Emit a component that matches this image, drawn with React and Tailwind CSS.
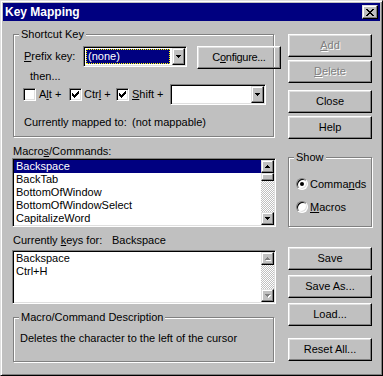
import React from "react";

const raised =
  "border border-t-white border-l-white border-r-black border-b-black shadow-[inset_-1px_-1px_0_#808080,inset_1px_1px_0_#dfdfdf]";
const sbRaised =
  "border border-t-[#dfdfdf] border-l-[#dfdfdf] border-r-black border-b-black shadow-[inset_-1px_-1px_0_#808080,inset_1px_1px_0_#fff]";
const sunken =
  "border border-t-[#808080] border-l-[#808080] border-r-white border-b-white shadow-[inset_1px_1px_0_#000,inset_-1px_-1px_0_#dfdfdf]";
const etched = "border border-[#808080] shadow-[inset_1px_1px_0_#fff,1px_1px_0_#fff]";
const checker =
  "bg-[image:repeating-conic-gradient(#c0c0c0_0%_25%,#fff_0%_50%)] bg-[length:2px_2px]";

// small 5x3 triangle, pixel style
const Arrow = ({ up = false, disabled = false }) => {
  const rows = up
    ? [[2, 0, 1], [1, 1, 3], [0, 2, 5]]
    : [[0, 0, 5], [1, 1, 3], [2, 2, 1]];
  return (
    <svg width="6" height="4" viewBox="0 0 6 4" shapeRendering="crispEdges">
      {disabled &&
        rows.map(([x, y, w]) => (
          <rect key={"s" + y} x={x + 1} y={y + 1} width={w} height="1" fill="#fff" />
        ))}
      {rows.map(([x, y, w]) => (
        <rect key={y} x={x} y={y} width={w} height="1" fill={disabled ? "#808080" : "#000"} />
      ))}
    </svg>
  );
};

const ArrowBtn = ({ up, disabled, className = "" }) => (
  <div className={`w-[13px] h-[13px] shrink-0 bg-[#c0c0c0] flex items-center justify-center ${sbRaised} ${className}`}>
    <Arrow up={up} disabled={disabled} />
  </div>
);

const ScrollBar = ({ disabled = false }) => (
  <div className="w-[13px] h-full flex flex-col">
    <ArrowBtn up disabled={disabled} />
    {!disabled && <div className={`h-[8px] shrink-0 bg-[#c0c0c0] ${sbRaised}`} />}
    <div className={`flex-1 ${checker}`} />
    <ArrowBtn disabled={disabled} />
  </div>
);

const Btn = ({ children, disabled = false, className = "" }) => (
  <div
    className={`h-[23px] w-[84px] shrink-0 flex items-center justify-center ${raised} ${
      disabled ? "text-[#808080] [text-shadow:1px_1px_0_#fff]" : ""
    } ${className}`}
  >
    <span>{children}</span>
  </div>
);

const Combo = ({ className = "", value }) => (
  <div className={`h-[21px] shrink-0 bg-white p-[1px] flex ${sunken} ${className}`}>
    <div className="flex-1 flex">
      {value && (
        <div className="flex-1 m-[1px] mr-[2px] bg-[#000080] border border-dotted border-[#ffff00] text-white pl-[1px] leading-[13px]">
          {value}
        </div>
      )}
    </div>
    <div className={`w-[13px] h-full bg-[#c0c0c0] flex items-center justify-center ${sbRaised}`}>
      <Arrow />
    </div>
  </div>
);

const Check = ({ checked }) => (
  <div className={`w-[13px] h-[13px] shrink-0 bg-white p-[1px] flex items-center justify-center ${sunken}`}>
    {checked && (
      <svg width="7" height="7" viewBox="0 0 7 7" shapeRendering="crispEdges">
        <rect x="6" y="0" width="1" height="1" />
        <rect x="5" y="1" width="2" height="1" />
        <rect x="0" y="2" width="1" height="1" />
        <rect x="4" y="2" width="3" height="1" />
        <rect x="0" y="3" width="2" height="1" />
        <rect x="3" y="3" width="3" height="1" />
        <rect x="0" y="4" width="5" height="1" />
        <rect x="1" y="5" width="3" height="1" />
        <rect x="2" y="6" width="1" height="1" />
      </svg>
    )}
  </div>
);

const Radio = ({ checked }) => (
  <div className="w-[12px] h-[12px] shrink-0 rounded-full bg-white border border-t-[#808080] border-l-[#808080] border-r-white border-b-white shadow-[inset_1px_1px_0_#000,inset_-1px_-1px_0_#dfdfdf] flex items-center justify-center">
    {checked && <div className="w-[4px] h-[4px] rounded-full bg-black" />}
  </div>
);

const GroupLabel = ({ children }) => (
  <span className="absolute left-[5px] top-[-7px] px-[2px] bg-[#c0c0c0]">{children}</span>
);

const commands = ["Backspace", "BackTab", "BottomOfWindow", "BottomOfWindowSelect", "CapitalizeWord"];

export default function App() {
  return (
    <div className="w-[383px] h-[376px] bg-[#c0c0c0] border border-t-[#dfdfdf] border-l-[#dfdfdf] border-r-black border-b-black shadow-[inset_1px_1px_0_#fff,inset_-1px_-1px_0_#808080] p-[2px] flex flex-col font-['Liberation_Sans',Arial,sans-serif] text-[11px] leading-[13px] text-black select-none">
      {/* Title bar */}
      <div className="h-[18px] shrink-0 bg-[#000080] flex items-start justify-between pl-[2px] pr-[2px]">
        <span className="text-white font-bold text-[12px] leading-[18px]">Key Mapping</span>
        <div className={`mt-[2px] w-[16px] h-[14px] bg-[#c0c0c0] flex items-center justify-center ${sbRaised}`}>
          <svg width="8" height="7" viewBox="0 0 8 7" shapeRendering="crispEdges">
            <rect x="0" y="0" width="2" height="1" />
            <rect x="6" y="0" width="2" height="1" />
            <rect x="1" y="1" width="2" height="1" />
            <rect x="5" y="1" width="2" height="1" />
            <rect x="2" y="2" width="4" height="1" />
            <rect x="3" y="3" width="2" height="1" />
            <rect x="2" y="4" width="4" height="1" />
            <rect x="1" y="5" width="2" height="1" />
            <rect x="5" y="5" width="2" height="1" />
            <rect x="0" y="6" width="2" height="1" />
            <rect x="6" y="6" width="2" height="1" />
          </svg>
        </div>
      </div>

      <div className="flex pl-[9px]">
        {/* Left column */}
        <div className="w-[264px] flex flex-col pt-[13px]">
          {/* Shortcut Key */}
          <div className={`relative ml-[1px] w-[261px] h-[103px] ${etched} pt-[11px] pl-[9px]`}>
            <GroupLabel>Shortcut Key</GroupLabel>
            <div className="flex items-start">
              <span className="ml-[1px] mt-[4px] w-[59px] shrink-0">
                <span className="underline">P</span>refix key:
              </span>
              <Combo className="w-[104px]" value="(none)" />
              <Btn className="ml-[10px] w-[70px] tracking-[-0.3px]">
                C<span className="underline">o</span>nfigure...
              </Btn>
            </div>
            <div className="ml-[7px] mt-[1px]">then...</div>
            <div className="mt-[1px] h-[21px] flex items-center">
              <div className="w-[46px] flex items-center">
                <Check />
                <span className="ml-[3px]">
                  A<span className="underline">l</span>t +
                </span>
              </div>
              <div className="w-[47px] flex items-center">
                <Check checked />
                <span className="ml-[2px]">
                  Ctr<span className="underline">l</span> +
                </span>
              </div>
              <div className="w-[54px] flex items-center">
                <Check checked />
                <span className="ml-[3px]">
                  <span className="underline">S</span>hift +
                </span>
              </div>
              <Combo className="w-[96px]" />
            </div>
            <div className="mt-[11px] flex">
              <span className="ml-[1px] w-[108px]">Currently mapped to:</span>
              <span>(not mappable)</span>
            </div>
          </div>

          <div className="mt-[8px] ml-[1px]">
            Macro<span className="underline">s</span>/Commands:
          </div>
          <div className={`h-[69px] w-[264px] bg-white p-[1px] flex ${sunken}`}>
            <div className="flex-1 flex flex-col">
              {commands.map((c, i) => (
                <div
                  key={c}
                  className={`h-[13px] pl-[2px] ${i === 0 ? "bg-[#000080] text-white" : ""}`}
                >
                  {c}
                </div>
              ))}
            </div>
            <ScrollBar />
          </div>

          <div className="mt-[7px] ml-[1px] flex">
            <span className="w-[99px]">
              Currently <span className="underline">k</span>eys for:
            </span>
            <span>Backspace</span>
          </div>
          <div className={`mt-[3px] h-[54px] w-[264px] bg-white p-[1px] flex ${sunken}`}>
            <div className="flex-1 flex flex-col">
              <div className="h-[13px] pl-[2px]">Backspace</div>
              <div className="h-[13px] pl-[2px]">Ctrl+H</div>
            </div>
            <ScrollBar disabled />
          </div>

          {/* Description */}
          <div className={`relative mt-[13px] ml-[1px] w-[261px] h-[45px] ${etched} pt-[14px] pl-[6px]`}>
            <GroupLabel>Macro/Command Description</GroupLabel>
            <div>Deletes the character to the left of the cursor</div>
          </div>
        </div>

        {/* Right column */}
        <div className="ml-[12px] w-[84px] flex flex-col pt-[13px]">
          <Btn disabled>
            <span className="underline">A</span>dd
          </Btn>
          <Btn disabled className="mt-[3px]">
            <span className="underline">D</span>elete
          </Btn>
          <Btn className="mt-[7px]">Close</Btn>
          <Btn className="mt-[3px]">Help</Btn>

          <div className={`relative mt-[18px] h-[70px] ${etched} pt-[20px] pl-[7px]`}>
            <GroupLabel>Show</GroupLabel>
            <div className="h-[12px] flex items-center">
              <Radio checked />
              <span className="ml-[2px]">
                Comma<span className="underline">n</span>ds
              </span>
            </div>
            <div className="mt-[11px] h-[12px] flex items-center">
              <Radio />
              <span className="ml-[2px]">
                <span className="underline">M</span>acros
              </span>
            </div>
          </div>

          <Btn className="mt-[20px]">Save</Btn>
          <Btn className="mt-[5px]">Save As...</Btn>
          <Btn className="mt-[5px]">Load...</Btn>
          <Btn className="mt-[12px]">Reset All...</Btn>
        </div>
      </div>
    </div>
  );
}
